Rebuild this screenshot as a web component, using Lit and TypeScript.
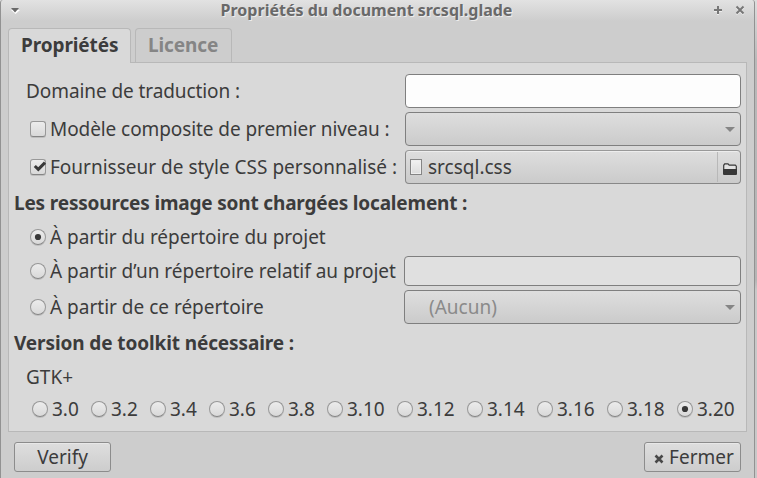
import { LitElement, html, css, svg, nothing } from "lit";
import { customElement, property } from "lit/decorators.js";
import { classMap } from "lit/directives/class-map.js";

@customElement("choice-mark")
class ChoiceMark extends LitElement {
  @property() kind = "radio";
  @property({ type: Boolean }) checked = false;
  static styles = css`
    :host { display: block; width: 16px; height: 16px; flex: none; }
    .box { box-sizing: border-box; width: 16px; height: 16px; border: 1px solid #989898; border-bottom-color: #858585;
      background: linear-gradient(#ececec, #d9d9d9); box-shadow: 0 1px 0 rgba(0,0,0,.12); }
    .radio { border-radius: 50%; }
    .check { border-radius: 3px; }
    svg { display: block; width: 14px; height: 14px; overflow: visible; }
  `;
  render() {
    const mark = this.kind === "radio"
      ? svg`<circle cx="7" cy="7" r="3.1" fill="#383838"/>`
      : svg`<path d="M3.8 6L7.3 9.4L14 2.6" fill="none" stroke="#383838" stroke-width="3"/>`;
    return html`<div class="box ${this.kind}"><svg viewBox="0 0 14 14">${this.checked ? mark : nothing}</svg></div>`;
  }
}

@customElement("app-root")
class AppRoot extends LitElement {
  static styles = css`
    :host { display: block; width: 757px; height: 478px; overflow: hidden;
      background: linear-gradient(#dedede, #b9b9b9 60px, #b5b5b5 280px, #c8c8c8 290px);
      font: 19px/26px "Noto Sans", sans-serif; color: #3c3c3c; }
    * { box-sizing: border-box; }
    svg { display: block; flex: none; }
    .window { width: 755px; height: 478px; border: solid #929292; border-width: 0 1px; border-radius: 3px 3px 0 0;
      background: linear-gradient(#e2e2e2, #cdcdcd 21px); display: flex; flex-direction: column; }
    .title { height: 28px; flex: none; display: grid; grid-template-columns: 49px 1fr 71px; padding: 0 9px 8px 9px; align-items: center; }
    .title h1 { margin: 0; font-size: 16px; line-height: 20px; color: #696969; text-shadow: 1px 1px 0 #ededed; text-align: center; white-space: nowrap; }
    .menu { margin-top: 2px; }
    .controls { display: flex; justify-content: flex-end; gap: 12px; }
    .tabs { display: flex; gap: 4px; height: 34px; padding-left: 7px; flex: none; }
    .tab { height: 34px; border: 1px solid #b8b8b8; border-bottom: 0; border-radius: 4px 4px 0 0; font-weight: 700; letter-spacing: -.1px; padding: 3px 0 0 12px; width: 97px; color: #858585; white-space: nowrap; }
    .tab.active { background: #d9d9d9; height: 35px; width: 123px; color: #3c3c3c; z-index: 1; }
    .panel { margin: 0 7px; height: 370px; flex: none; background: #d9d9d9; border: 1px solid #b8b8b8;
      padding: 11px 5px 0; display: flex; flex-direction: column; gap: 4px; }
    .row { display: flex; align-items: center; height: 34px; flex: none; white-space: nowrap; }
    .row.low { height: 30px; }
    .label { width: 391px; flex: none; display: flex; align-items: center; gap: 4px; padding-left: 16px; }
    .label.plain { padding-left: 12px; }
    .label.wide { width: 390px; }
    .snug { letter-spacing: -.085px; }
    .tight { letter-spacing: -.025px; }
    .head { font-weight: 700; letter-spacing: -.17px; }
    .head.toolkit { letter-spacing: -.11px; }
    .field { flex: 1; height: 100%; border: 1px solid #7f7f7f; border-radius: 4px; background: #fdfdfd; display: flex; align-items: center; }
    .field.off { background: #e0e0e0; }
    .field.combo { background: linear-gradient(#dedede, #cbcbcb); padding: 0 5px 0 24px; justify-content: space-between; color: #8a8a8a; }
    .field.file { background: linear-gradient(#dedede, #cbcbcb); border-color: #999 #888 #888; box-shadow: inset 0 1px 0 #ededed; padding-left: 4px; gap: 6px; }
    .page { width: 12px; height: 16px; border: 1px solid #858585; background: linear-gradient(#f2f2f2, #dcdcdc); box-shadow: inset 0 0 0 1px #eee; }
    .open { margin-left: auto; width: 23px; height: 30px; border-left: 1px solid #b8b8b8; display: flex; align-items: center; padding-left: 5px; padding-top: 4px; }
    .versions { display: flex; padding-left: 18px; height: 26px; align-items: center; }
    .version { display: flex; align-items: center; gap: 4px; width: 59px; flex: none; }
    .version.long { width: 70px; }
    .actions { display: flex; justify-content: space-between; padding: 10px 13px 0; }
    .button { height: 30px; width: 97px; display: flex; align-items: center; justify-content: center; gap: 5px;
      border: 1px solid #8c8c8c; border-radius: 3px; background: linear-gradient(#dedede, #cdcdcd); box-shadow: inset 0 1px 0 #e8e8e8; }
    .close { padding-left: 3px; }
    .close svg { margin-top: 3px; }
  `;

  arrow() {
    return html`<svg width="10" height="5" viewBox="0 0 10 5"><path d="M0 0H10L5 5Z" fill="#858585"/></svg>`;
  }

  render() {
    const versions = ["3.0", "3.2", "3.4", "3.6", "3.8", "3.10", "3.12", "3.14", "3.16", "3.18", "3.20"];
    return html`<div class="window">
      <div class="title">
        <svg class="menu" width="10" height="6" viewBox="0 0 10 6"><path d="M1 2H10L5.5 6Z" fill="#fff"/><path d="M1 0H9L5 4.4Z" fill="#696969"/></svg>
        <h1>Propriétés du document srcsql.glade</h1>
        <div class="controls">
          <svg width="10" height="10" viewBox="0 0 10 10"><path d="M1 6H9M5 2V10" stroke="#eee" stroke-width="2"/><path d="M1 5H9M5 1V9" stroke="#777" stroke-width="2"/></svg>
          <svg width="10" height="10" viewBox="0 0 10 10"><path d="M1.5 2.5L8.5 9.5M8.5 2.5L1.5 9.5" stroke="#eee" stroke-width="2"/><path d="M1.5 1.5L8.5 8.5M8.5 1.5L1.5 8.5" stroke="#777" stroke-width="2"/></svg>
        </div>
      </div>
      <div class="tabs"><div class="tab active">Propriétés</div><div class="tab">Licence</div></div>
      <div class="panel">
        <div class="row"><div class="label plain snug">Domaine de traduction :</div><div class="field"></div></div>
        <div class="row"><div class="label snug"><choice-mark kind="check"></choice-mark><span>Modèle composite de premier niveau :</span></div>
          <div class="field combo"><span></span>${this.arrow()}</div></div>
        <div class="row"><div class="label"><choice-mark kind="check" checked></choice-mark><span>Fournisseur de style CSS personnalisé :</span></div>
          <div class="field file"><div class="page"></div><span>srcsql.css</span>
            <div class="open"><svg width="14" height="13" viewBox="0 0 14 13"><path d="M.7 11V2.3L1.7.9H5L6.2 2.2H12.3L13.3 3.2V11Z" fill="#e2e2e2" stroke="#383838" stroke-width="1.2"/><path d="M0 6H14V11L13 12H1L0 11Z" fill="#383838"/></svg></div></div></div>
        <div class="row low head">Les ressources image sont chargées localement :</div>
        <div class="row low"><div class="label tight"><choice-mark checked></choice-mark><span>À partir du répertoire du projet</span></div></div>
        <div class="row low"><div class="label wide tight"><choice-mark></choice-mark><span>À partir d’un répertoire relatif au projet</span></div><div class="field off"></div></div>
        <div class="row"><div class="label wide"><choice-mark></choice-mark><span>À partir de ce répertoire</span></div>
          <div class="field combo"><span>(Aucun)</span>${this.arrow()}</div></div>
        <div class="row low head toolkit">Version de toolkit nécessaire :</div>
        <div class="row low"><div class="label plain">GTK+</div></div>
        <div class="versions">${versions.map(v => html`<div class=${classMap({ version: true, long: v.length > 3 })}>
          <choice-mark ?checked=${v === "3.20"}></choice-mark><span>${v}</span></div>`)}</div>
      </div>
      <div class="actions"><div class="button">Verify</div>
        <div class="button close"><svg width="10" height="10" viewBox="0 0 10 10"><path d="M1.5 1.5L8.5 8.5M8.5 1.5L1.5 8.5" stroke="#484848" stroke-width="2.6"/></svg><span>Fermer</span></div></div>
    </div>`;
  }
}
